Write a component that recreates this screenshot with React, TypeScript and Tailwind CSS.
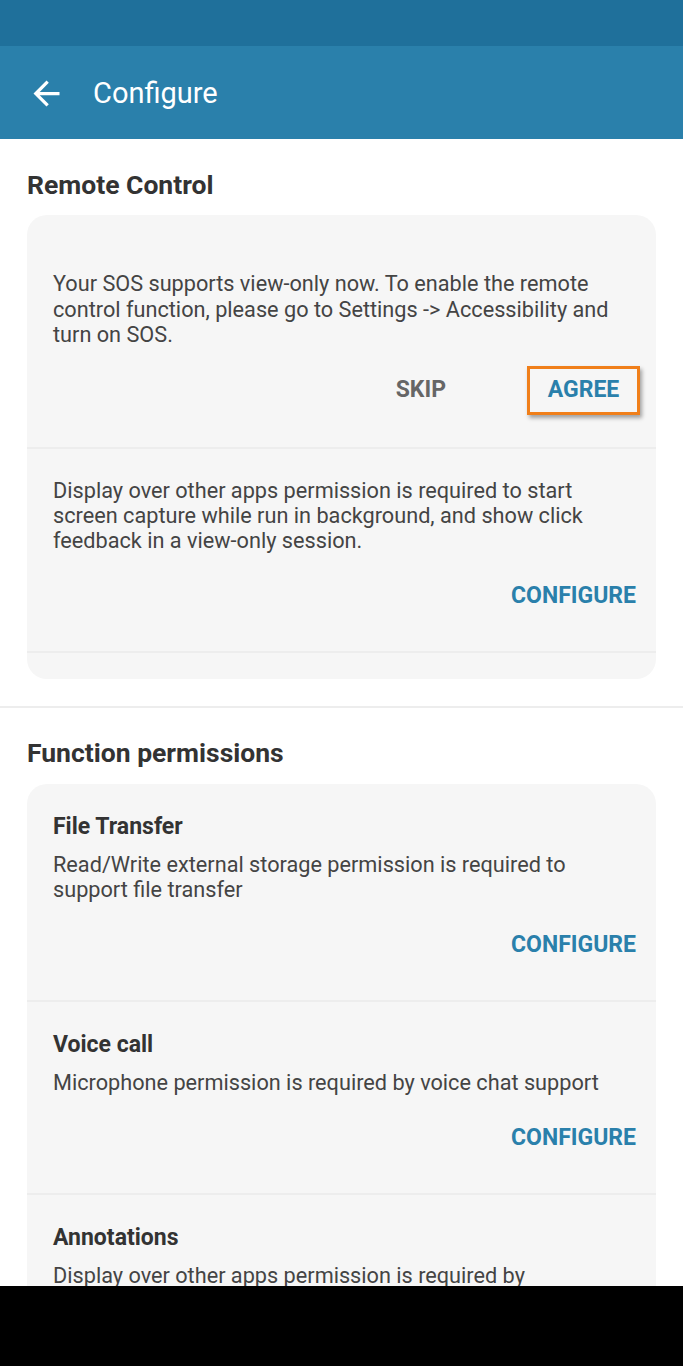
import React from 'react';

const font = { fontFamily: 'Roboto, "Liberation Sans", sans-serif' };

function ArrowBack() {
  return (
    <svg viewBox="0 0 24 24" className="w-[39px] h-[39px]" fill="white">
      <path d="M20 11H7.83l5.59-5.59L12 4l-8 8 8 8 1.41-1.41L7.83 13H20v-2z" />
    </svg>
  );
}

function Divider() {
  return <div className="h-[2px] bg-[#ededed]" />;
}

interface ItemProps {
  title?: string;
  text: string;
  action?: boolean;
}

function Item({ title, text, action = true }: ItemProps) {
  return (
    <div className={`pt-[29px] ${action ? 'pb-[34px]' : ''} pl-[26px] pr-[20px]`}>
      {title && (
        <div className="text-[23px] leading-[28px] font-bold text-[#333333] mb-[11px]">{title}</div>
      )}
      <p className="text-[21.7px] leading-[25px] text-[#444444] pr-[16px]">{text}</p>
      {action && (
        <div className="mt-[24px] flex justify-end items-center h-[40px]">
          <button className="text-[23px] font-bold text-[#2a80ab]">CONFIGURE</button>
        </div>
      )}
    </div>
  );
}

export default function App() {
  return (
    <div className="w-[683px] h-[1366px] flex flex-col overflow-hidden bg-white" style={font}>
      {/* status bar */}
      <div className="h-[46px] bg-[#1f709b] shrink-0" />

      {/* toolbar */}
      <div className="h-[93px] bg-[#2a80ab] shrink-0 flex items-center pl-[27px] pt-[2px]">
        <ArrowBack />
        <span className="ml-[27px] text-[29px] text-white">Configure</span>
      </div>

      <div className="flex-1 overflow-hidden">
        {/* Remote Control */}
        <div className="px-[27px] pt-[30px] pb-[27px]">
          <h2 className="text-[26.5px] leading-[32px] font-bold text-[#333333]">Remote Control</h2>
          <div className="mt-[14px] rounded-[20px] bg-[#f6f6f6] overflow-hidden">
            <div className="pt-[56px] pb-[32px] pl-[26px] pr-[16px]">
              <p className="text-[21.7px] leading-[25.5px] text-[#444444] pr-[20px]">
                Your SOS supports view-only now. To enable the remote control function, please go to
                Settings -&gt; Accessibility and turn on SOS.
              </p>
              <div className="mt-[18px] flex justify-end items-center gap-[81px]">
                <button className="text-[23px] font-bold text-[#666666]">SKIP</button>
                <button className="w-[113px] h-[49px] border-[3px] border-[#f07f1a] shadow-[2px_3px_4px_rgba(0,0,0,0.35)] text-[23px] font-bold text-[#2a80ab]">
                  AGREE
                </button>
              </div>
            </div>
            <Divider />
            <Item text="Display over other apps permission is required to start screen capture while run in background, and show click feedback in a view-only session." />
            <Divider />
            <div className="h-[26px]" />
          </div>
        </div>

        <div className="h-[2px] bg-[#ededed]" />

        {/* Function permissions */}
        <div className="px-[27px] pt-[29px]">
          <h2 className="text-[26.5px] leading-[32px] font-bold text-[#333333]">Function permissions</h2>
          <div className="mt-[15px] rounded-t-[20px] bg-[#f6f6f6]">
            <Item title="File Transfer" text="Read/Write external storage permission is required to support file transfer" />
            <Divider />
            <Item title="Voice call" text="Microphone permission is required by voice chat support" />
            <Divider />
            <Item title="Annotations" text="Display over other apps permission is required by" action={false} />
          </div>
        </div>
      </div>

      {/* navigation bar */}
      <div className="h-[80px] bg-black shrink-0" />
    </div>
  );
}
